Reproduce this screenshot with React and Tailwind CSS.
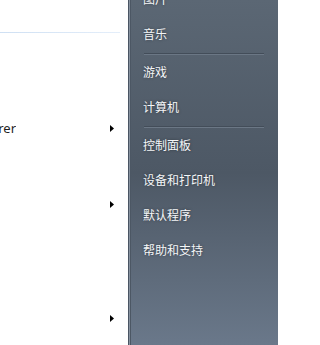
import React from 'react';

const leftRows = [
  { label: '', arrow: false },
  { label: '', arrow: false },
  { label: 'Internet Explorer', arrow: true },
  { label: '', arrow: false },
  { label: '', arrow: true },
  { label: '', arrow: false },
  { label: '', arrow: false },
  { label: '', arrow: true },
];

// right column of the start menu; 'sep' marks a separator line
const rightItems = ['图片', '音乐', 'sep', '游戏', '计算机', 'sep', '控制面板', '设备和打印机', '默认程序', '帮助和支持'];

function Arrow() {
  return (
    <svg width="4" height="7" viewBox="0 0 4 7" className="shrink-0">
      <path d="M0 0 L4 3.5 L0 7 Z" fill="#000" />
    </svg>
  );
}

export default function App() {
  return (
    <div
      className="flex w-[278px] h-[345px] overflow-hidden"
      style={{ fontFamily: '"Noto Sans", "Noto Sans CJK SC", sans-serif' }}
    >
      {/* programs list */}
      <div className="w-[128px] shrink-0 bg-white flex flex-col">
        <div className="h-[32px]" />
        <div className="h-px w-[120px] bg-gradient-to-r from-[#cfe0f3] to-[#e4eefa]" />
        {leftRows.map((row, i) => (
          <div key={i} className="h-[38px] flex items-center">
            <div className="w-[16px] overflow-hidden flex justify-end">
              {row.label && (
                <span className="shrink-0 whitespace-nowrap text-[13px] text-[#1e1e1e] leading-none">{row.label}</span>
              )}
            </div>
            <div className="flex-1" />
            {row.arrow && <Arrow />}
            <div className="w-[14px]" />
          </div>
        ))}
      </div>

      {/* panel edge */}
      <div className="w-px shrink-0 bg-[#4a5563]" />
      <div className="w-px shrink-0 bg-[#8893a0]" />
      <div className="w-px shrink-0 bg-[#4c5764]" />

      {/* places column */}
      <div className="flex-1 bg-gradient-to-b from-[#5b6774] via-[#4d5865] to-[#6a788a] flex flex-col pl-[12px] pr-[14px]">
        <div className="-mt-[18px] flex flex-col">
          {rightItems.map((item, i) =>
            item === 'sep' ? (
              <div key={i} className="h-[3px] flex flex-col justify-center pl-px">
                <div className="h-px bg-[#434d59]" />
                <div className="h-px bg-[#6b7785]" />
              </div>
            ) : (
              <div
                key={i}
                className="h-[35px] flex items-center text-[12px] text-[#f4f6f8] leading-none [text-shadow:0_0_3px_rgba(0,0,0,0.4)]"
              >
                {item}
              </div>
            )
          )}
        </div>
      </div>
    </div>
  );
}
